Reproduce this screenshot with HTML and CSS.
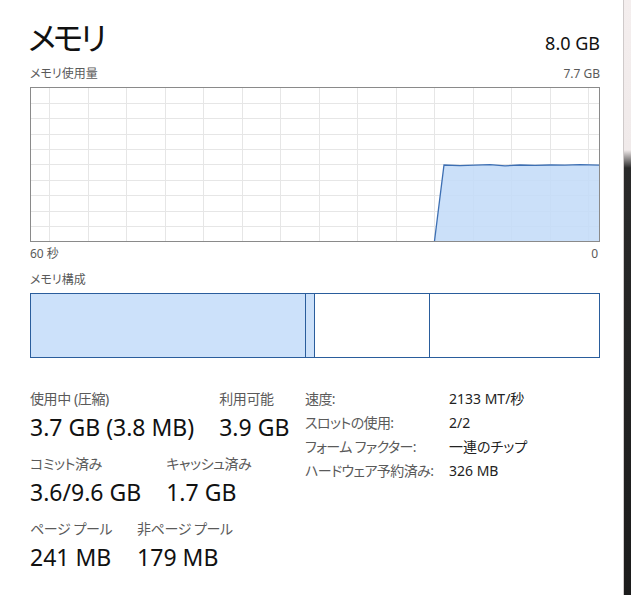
FILE: index.html
```html
<!DOCTYPE html>
<html lang="ja">
<head>
<meta charset="utf-8">
<title>メモリ</title>
<link rel="stylesheet" href="styles.css">
</head>
<body>
<div class="page">
  <div class="header">
    <div class="title">メモリ</div>
    <div class="total">8.0 GB</div>
  </div>
  <div class="caption-row">
    <span>メモリ使用量</span>
    <span>7.7 GB</span>
  </div>
  <svg class="graph" width="570" height="155" viewBox="0 0 570 155">
    <g stroke="#e6e6e6" stroke-width="1">
      <line x1="19.5" y1="0" x2="19.5" y2="155"/>
      <line x1="58.5" y1="0" x2="58.5" y2="155"/>
      <line x1="96.5" y1="0" x2="96.5" y2="155"/>
      <line x1="135.5" y1="0" x2="135.5" y2="155"/>
      <line x1="173.5" y1="0" x2="173.5" y2="155"/>
      <line x1="212.5" y1="0" x2="212.5" y2="155"/>
      <line x1="250.5" y1="0" x2="250.5" y2="155"/>
      <line x1="289.5" y1="0" x2="289.5" y2="155"/>
      <line x1="327.5" y1="0" x2="327.5" y2="155"/>
      <line x1="366.5" y1="0" x2="366.5" y2="155"/>
      <line x1="404.5" y1="0" x2="404.5" y2="155"/>
      <line x1="443.5" y1="0" x2="443.5" y2="155"/>
      <line x1="481.5" y1="0" x2="481.5" y2="155"/>
      <line x1="520.5" y1="0" x2="520.5" y2="155"/>
      <line x1="558.5" y1="0" x2="558.5" y2="155"/>
      <line x1="0" y1="16.5" x2="570" y2="16.5"/>
      <line x1="0" y1="31.5" x2="570" y2="31.5"/>
      <line x1="0" y1="47.5" x2="570" y2="47.5"/>
      <line x1="0" y1="62.5" x2="570" y2="62.5"/>
      <line x1="0" y1="77.5" x2="570" y2="77.5"/>
      <line x1="0" y1="93.5" x2="570" y2="93.5"/>
      <line x1="0" y1="108.5" x2="570" y2="108.5"/>
      <line x1="0" y1="124.5" x2="570" y2="124.5"/>
      <line x1="0" y1="139.5" x2="570" y2="139.5"/>
    </g>
    <polygon points="404.5,154 414,78 430,78.6 445,78.2 460,77.6 475,78.8 490,78 505,78.3 520,78 535,78.2 550,77.6 569,78.2 569,154" fill="#c2dbf8" fill-opacity="0.85" stroke="none"/>
    <polyline points="404.5,154 414,78 430,78.6 445,78.2 460,77.6 475,78.8 490,78 505,78.3 520,78 535,78.2 550,77.6 569,78.2" fill="none" stroke="#3d6fb3" stroke-width="1.3"/>
    <rect x="0.5" y="0.5" width="569" height="154" fill="none" stroke="#8a8a8a" stroke-width="1"/>
  </svg>
  <div class="caption-row axis">
    <span>60 秒</span>
    <span>0</span>
  </div>
  <div class="caption">メモリ構成</div>
  <div class="composition">
    <div class="seg seg-inuse"></div>
    <div class="seg seg-modified"></div>
    <div class="seg seg-standby"></div>
    <div class="seg seg-free"></div>
  </div>
  <div class="stats">
    <div class="stats-left">
      <div class="stat-row">
        <div class="stat"><div class="stat-label">使用中 (圧縮)</div><div class="stat-value">3.7 GB (3.8 MB)</div></div>
        <div class="stat"><div class="stat-label">利用可能</div><div class="stat-value">3.9 GB</div></div>
      </div>
      <div class="stat-row">
        <div class="stat"><div class="stat-label">コミット済み</div><div class="stat-value">3.6/9.6 GB</div></div>
        <div class="stat"><div class="stat-label">キャッシュ済み</div><div class="stat-value">1.7 GB</div></div>
      </div>
      <div class="stat-row">
        <div class="stat"><div class="stat-label">ページ プール</div><div class="stat-value">241 MB</div></div>
        <div class="stat"><div class="stat-label">非ページ プール</div><div class="stat-value">179 MB</div></div>
      </div>
    </div>
    <div class="stats-right">
      <div class="kv-label">速度:</div><div class="kv-value">2133 MT/秒</div>
      <div class="kv-label">スロットの使用:</div><div class="kv-value">2/2</div>
      <div class="kv-label">フォーム ファクター:</div><div class="kv-value">一連のチップ</div>
      <div class="kv-label">ハードウェア予約済み:</div><div class="kv-value">326 MB</div>
    </div>
  </div>
</div>
<div class="edge"></div>
</body>
</html>
```

FILE: styles.css
```css
html, body {
  margin: 0;
  padding: 0;
  background: #ffffff;
}

body {
  width: 631px;
  height: 595px;
  overflow: hidden;
  position: relative;
  font-family: "Noto Sans", "Noto Sans CJK JP", sans-serif;
  font-feature-settings: "palt";
  color: #1a1a1a;
}

.page {
  width: 570px;
  padding: 16px 0 0 30px;
}

.header {
  display: flex;
  justify-content: space-between;
  align-items: baseline;
  height: 50px;
}

.title {
  font-size: 32px;
  line-height: 44px;
  margin-left: -2px;
  letter-spacing: -3px;
  font-weight: 400;
  color: #111;
}

.total {
  font-size: 18px;
  line-height: 24px;
  color: #111;
}

.caption-row {
  display: flex;
  justify-content: space-between;
  font-size: 12px;
  line-height: 16px;
  height: 21px;
  color: #5a5a5a;
}

.caption-row.axis {
  height: 26px;
  margin-top: 4px;
  padding-right: 2px;
}

.graph {
  display: block;
}

.caption {
  font-size: 12px;
  line-height: 16px;
  height: 21px;
  color: #5a5a5a;
}

.composition {
  display: flex;
  height: 63px;
  border: 1px solid #2a5d9c;
  width: 568px;
}

.seg {
  height: 100%;
  border-right: 1px solid #2a5d9c;
}

.seg-inuse {
  width: 274px;
  background: #cce1fa;
}

.seg-modified {
  width: 8px;
  background: #cce1fa;
}

.seg-standby {
  width: 114px;
  background: #ffffff;
}

.seg-free {
  flex: 1;
  border-right: none;
  background: #ffffff;
}

.stats {
  display: grid;
  grid-template-columns: 275px 1fr;
  margin-top: 31px;
}

.stats-left {
  display: flex;
  flex-direction: column;
  gap: 12px;
}

.stat-row {
  display: flex;
  gap: 25px;
}

.stat-label {
  font-size: 14px;
  line-height: 20px;
  letter-spacing: -0.4px;
  color: #5a5a5a;
}

.stat-value {
  font-size: 23px;
  line-height: 30px;
  padding-top: 3px;
  color: #111;
}

.stats-right {
  display: grid;
  grid-template-columns: 144px auto;
  grid-auto-rows: 24px;
  align-content: start;
  font-size: 14px;
  line-height: 20px;
}

.kv-label {
  color: #5a5a5a;
  letter-spacing: -0.6px;
}

.kv-value {
  color: #222;
}

.edge {
  position: absolute;
  top: 0;
  right: 0;
  width: 7px;
  height: 595px;
  background: linear-gradient(to bottom, #f4eeee 0px, #f0eaea 150px, #2a2a2a 168px, #1c1c1c 595px);
  border-left: 1px solid #cfcaca;
}
```
